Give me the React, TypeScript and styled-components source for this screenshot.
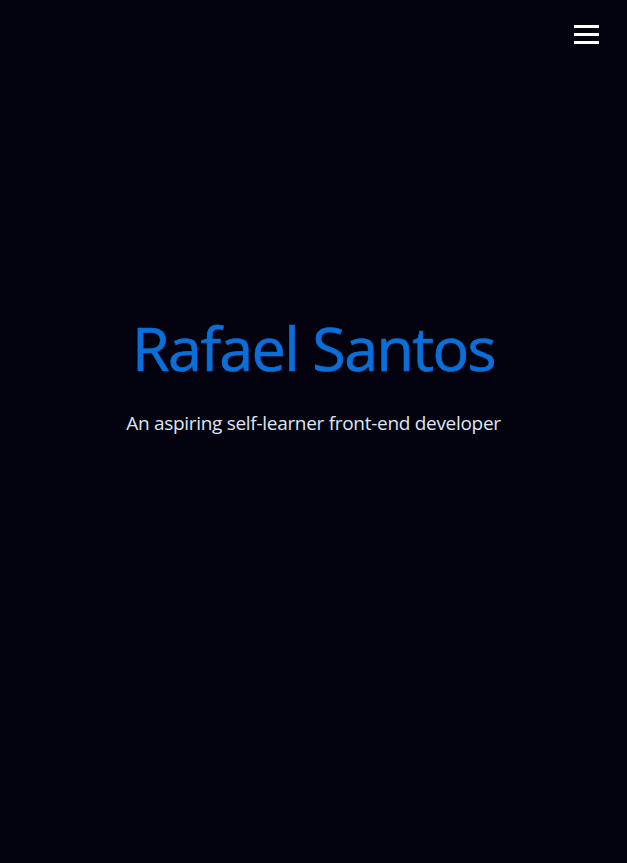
import React from "react";
import styled, { createGlobalStyle } from "styled-components";

const Global = createGlobalStyle`
  html, body { margin: 0; padding: 0; background: #03030f; }
  body { font-family: "Open Sans", "Noto Sans", sans-serif; }
`;

const Page = styled.div`
  width: 627px;
  height: 863px;
  background: #03030f;
  display: flex;
  flex-direction: column;
`;

const TopBar = styled.header`
  display: flex;
  justify-content: flex-end;
  padding: 25px 28px 0 0;
`;

const MenuButton = styled.button`
  display: flex;
  flex-direction: column;
  gap: 5px;
  padding: 0;
  background: none;
  border: none;
  cursor: pointer;
`;

const Bar = styled.span`
  display: block;
  width: 25px;
  height: 3px;
  background: #ffffff;
`;

const Hero = styled.main`
  flex: 1;
  display: flex;
  flex-direction: column;
  align-items: center;
  justify-content: flex-start;
  padding-top: 262px;
`;

const Title = styled.h1`
  margin: 0;
  font-family: "Open Sans", sans-serif;
  font-weight: 400;
  font-size: 61px;
  line-height: 84px;
  color: #0a6fd8;
  letter-spacing: -1.6px;
  -webkit-text-stroke: 0.7px #0a6fd8;
`;

const Subtitle = styled.p`
  margin: 21px 0 0;
  font-family: "Open Sans", sans-serif;
  font-size: 19px;
  line-height: 24px;
  color: #dfe6f2;
  letter-spacing: -0.3px;
`;

export default function App() {
  return (
    <>
      <Global />
      <Page>
        <TopBar>
          <MenuButton aria-label="Menu">
            <Bar />
            <Bar />
            <Bar />
          </MenuButton>
        </TopBar>
        <Hero>
          <Title>Rafael Santos</Title>
          <Subtitle>An aspiring self-learner front-end developer</Subtitle>
        </Hero>
      </Page>
    </>
  );
}
